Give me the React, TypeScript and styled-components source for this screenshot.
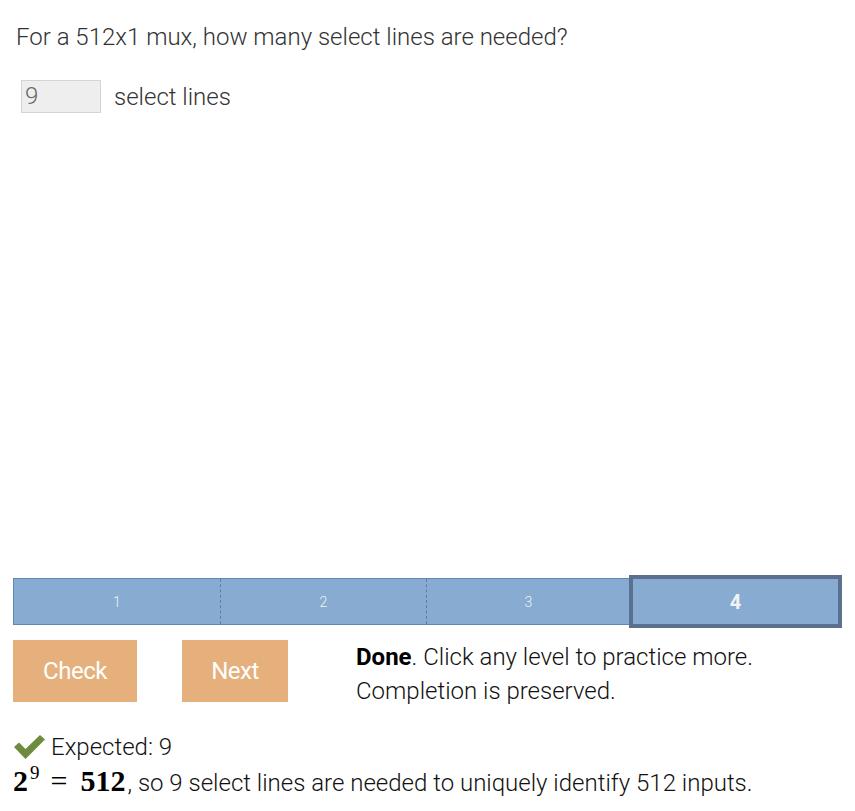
import React from "react";
import styled, { createGlobalStyle } from "styled-components";

const GlobalStyle = createGlobalStyle`
  html, body {
    margin: 0;
    padding: 0;
    background: #fff;
  }
  body {
    font-family: Roboto, "Liberation Sans", sans-serif;
    font-weight: 300;
    color: #333;
  }
`;

const Page = styled.div`
  width: 855px;
  height: 811px;
  box-sizing: border-box;
  padding: 0 13px;
  display: flex;
  flex-direction: column;
`;

const Question = styled.p`
  margin: 23px 0 0 3px;
  font-size: 24px;
  line-height: 28px;
  color: #333;
`;

const AnswerRow = styled.div`
  display: flex;
  align-items: center;
  gap: 13px;
  margin: 29px 0 0 8px;
`;

const AnswerBox = styled.div`
  width: 78px;
  height: 31px;
  border: 1px solid #d4d4d4;
  background: #eee;
  box-sizing: content-box;
  font-size: 24px;
  line-height: 31px;
  color: #666;
  text-indent: 3px;
`;

const Unit = styled.span`
  font-size: 24px;
  color: #333;
`;

const Spacer = styled.div`
  flex: 1;
`;

const Levels = styled.div`
  display: grid;
  grid-template-columns: 207px 206px 204px 1fr;
  height: 47px;
  box-sizing: border-box;
  border: 1px solid #5d88b3;
  background: #87abd1;
  margin-bottom: 15px;
`;

const Level = styled.div<{ $active?: boolean; $last?: boolean }>`
  display: flex;
  align-items: center;
  justify-content: center;
  color: #f3f3f3;
  font-size: ${(p) => (p.$active ? "20px" : "14px")};
  font-weight: ${(p) => (p.$active ? 700 : 300)};
  border-right: ${(p) => (p.$last ? "none" : "1px dashed #5d7e9e")};
  ${(p) =>
    p.$active &&
    `
    margin: -4px -1px -4px -2px;
    border: 4px solid #5b6f8f;
  `}
`;

const Controls = styled.div`
  display: flex;
  align-items: flex-start;
`;

const Button = styled.button<{ $w: number; $gap: number }>`
  width: ${(p) => p.$w}px;
  height: 62px;
  margin-right: ${(p) => p.$gap}px;
  border: none;
  background: #e5b07c;
  color: #fff;
  font-family: Roboto, "Liberation Sans", sans-serif;
  font-size: 24px;
  font-weight: 400;
  letter-spacing: -0.5px;
  padding: 0;
`;

const Status = styled.div`
  font-size: 24px;
  line-height: 34px;
  color: #111;
  b {
    font-weight: 700;
    color: #000;
  }
`;

const Feedback = styled.div`
  margin-top: 26px;
  margin-bottom: 13px;
  font-size: 24px;
  color: #111;
`;

const ExpectedRow = styled.div`
  display: flex;
  align-items: flex-end;
  gap: 5px;
  line-height: 26px;
`;

const Explanation = styled.div`
  margin-top: 6px;
  line-height: 30px;
`;

const MathText = styled.span`
  font-family: "Liberation Serif", "DejaVu Serif", serif;
  font-size: 30px;
  font-weight: 700;
  color: #000;
  margin-right: 2px;
  sup {
    font-size: 19px;
    font-weight: 400;
    vertical-align: 12px;
    line-height: 0;
    margin-left: 2px;
  }
  .eq {
    font-weight: 400;
    margin: 0 13px 0 11px;
  }
`;

function Check() {
  return (
    <svg width="33" height="26" viewBox="0 0 33 26">
      <path d="M1 13 L6 8.5 L12.5 15 L27 1 L32 5.5 L12.5 25 Z" fill="#6e8b3d" />
    </svg>
  );
}

export default function App() {
  return (
    <>
      <GlobalStyle />
      <Page>
        <Question>For a 512x1 mux, how many select lines are needed?</Question>
        <AnswerRow>
          <AnswerBox>9</AnswerBox>
          <Unit>select lines</Unit>
        </AnswerRow>
        <Spacer />
        <Levels>
          <Level>1</Level>
          <Level>2</Level>
          <Level>3</Level>
          <Level $active $last>
            4
          </Level>
        </Levels>
        <Controls>
          <Button $w={124} $gap={45}>Check</Button>
          <Button $w={106} $gap={68}>Next</Button>
          <Status>
            <b>Done</b>. Click any level to practice more.
            <br />
            Completion is preserved.
          </Status>
        </Controls>
        <Feedback>
          <ExpectedRow>
            <Check />
            <span>Expected: 9</span>
          </ExpectedRow>
          <Explanation>
            <MathText>
              2<sup>9</sup>
              <span className="eq">=</span>512
            </MathText>
            , so 9 select lines are needed to uniquely identify 512 inputs.
          </Explanation>
        </Feedback>
      </Page>
    </>
  );
}
